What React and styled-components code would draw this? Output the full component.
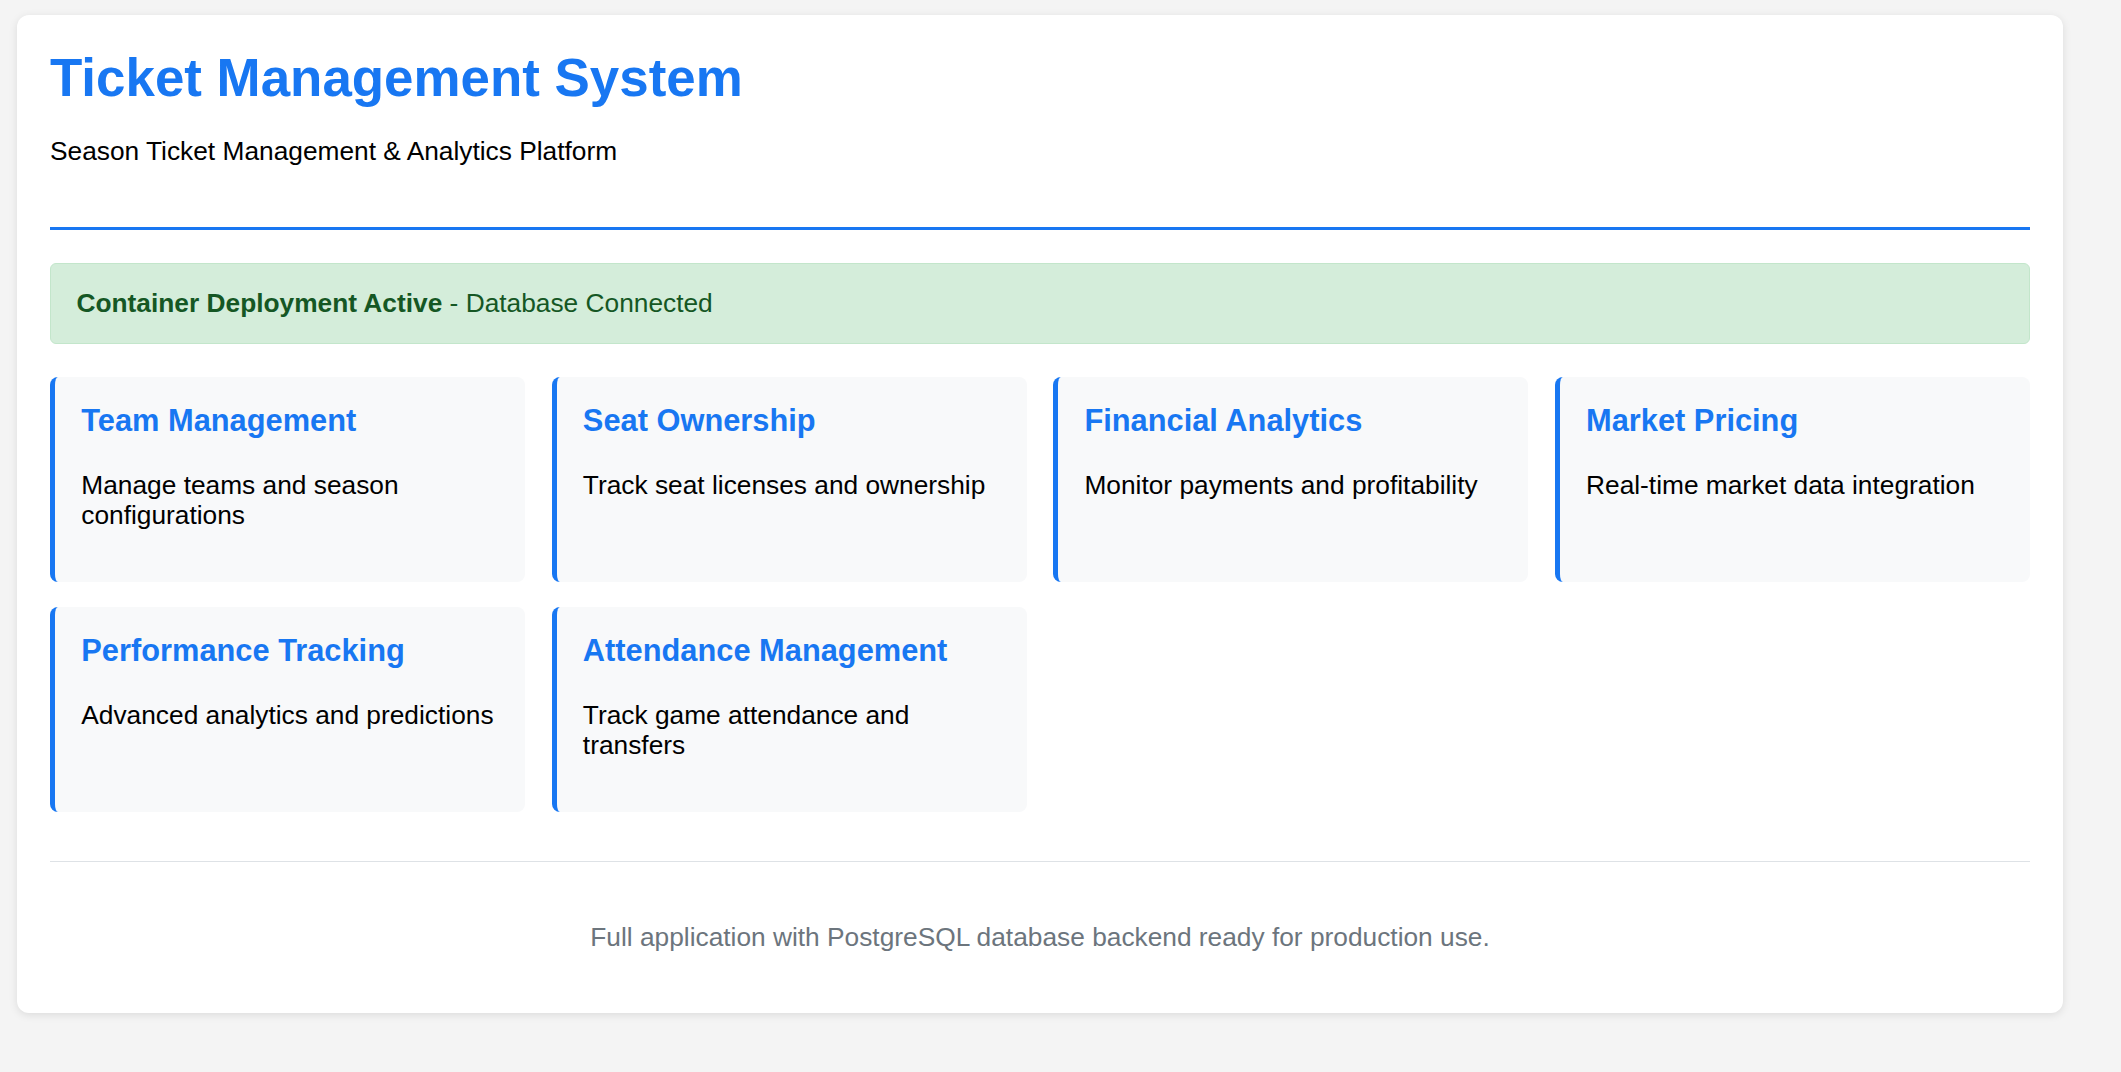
import React from 'react';
import styled, { createGlobalStyle } from 'styled-components';

const GlobalStyle = createGlobalStyle`
  html, body {
    margin: 0;
    padding: 0;
    background: #f4f4f4;
    font-family: "Liberation Sans", Arial, sans-serif;
    font-size: 26.3px;
    color: #000;
  }
`;

const color = {
  blue: '#1877f2',
  cardBg: '#f8f9fa',
  muted: '#6c757d',
  rule: '#dee2e6',
};

const Page = styled.div`
  padding: 15px 58px 60px 17px;
`;

const Container = styled.main`
  width: 2046px;
  box-sizing: border-box;
  padding: 33px;
  background: #fff;
  border-radius: 12px;
  box-shadow: 0 2px 8px rgba(0, 0, 0, 0.1);
`;

const Header = styled.header`
  padding-bottom: 60px;
  border-bottom: 3px solid ${color.blue};
`;

const Title = styled.h1`
  margin: 0;
  font-size: 52.9px;
  line-height: 1.15;
  font-weight: bold;
  color: ${color.blue};
`;

const Subtitle = styled.p`
  margin: 27px 0 0;
  font-size: 26.3px;
`;

const Status = styled.div`
  margin-top: 33.3px;
  padding: 24px 25.5px;
  background: #d4edda;
  border: 1px solid #c3e6cb;
  border-radius: 6px;
  color: #155724;
`;

const Grid = styled.section`
  display: grid;
  grid-template-columns: repeat(4, 1fr);
  gap: 25px 26.3px;
  margin-top: 33px;
`;

const Card = styled.article`
  padding: 25.6px 26.3px 0 26.3px;
  background: ${color.cardBg};
  border-left: 5.3px solid ${color.blue};
  border-radius: 8px;
  min-height: 205px;
  box-sizing: border-box;
`;

const CardTitle = styled.h3`
  margin: 0 0 30.8px;
  font-size: 30.8px;
  font-weight: bold;
  color: ${color.blue};
`;

const CardText = styled.p`
  margin: 0 0 26.3px;
  line-height: 30.7px;
`;

const Footer = styled.footer`
  margin-top: 49.3px;
  padding-top: 33px;
  border-top: 1.3px solid ${color.rule};
  text-align: center;
  color: ${color.muted};
`;

const FooterText = styled.p`
  margin: 26.3px 0 27px;
`;

const features = [
  { title: 'Team Management', text: 'Manage teams and season configurations' },
  { title: 'Seat Ownership', text: 'Track seat licenses and ownership' },
  { title: 'Financial Analytics', text: 'Monitor payments and profitability' },
  { title: 'Market Pricing', text: 'Real-time market data integration' },
  { title: 'Performance Tracking', text: 'Advanced analytics and predictions' },
  { title: 'Attendance Management', text: 'Track game attendance and transfers' },
];

const App = () => (
  <>
    <GlobalStyle />
    <Page>
      <Container>
        <Header>
          <Title>Ticket Management System</Title>
          <Subtitle>Season Ticket Management &amp; Analytics Platform</Subtitle>
        </Header>

        <Status>
          <strong>Container Deployment Active</strong> - Database Connected
        </Status>

        <Grid>
          {features.map((f) => (
            <Card key={f.title}>
              <CardTitle>{f.title}</CardTitle>
              <CardText>{f.text}</CardText>
            </Card>
          ))}
        </Grid>

        <Footer>
          <FooterText>
            Full application with PostgreSQL database backend ready for production use.
          </FooterText>
        </Footer>
      </Container>
    </Page>
  </>
);

export default App;
